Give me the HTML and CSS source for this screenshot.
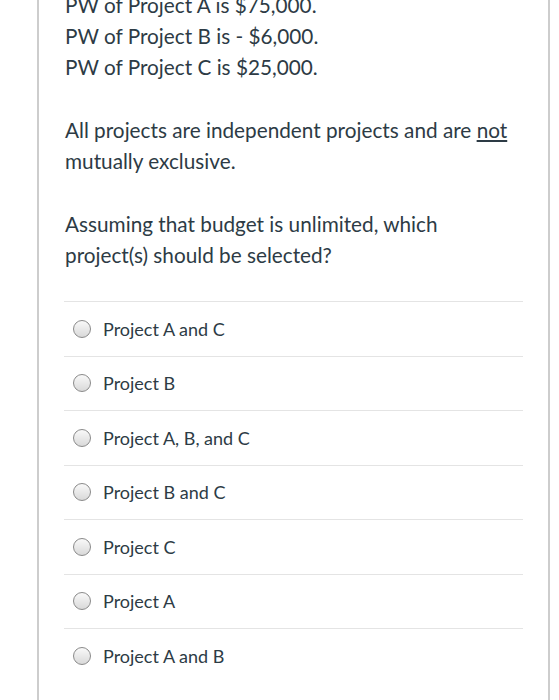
FILE: index.html
```html
<!DOCTYPE html>
<html>
<head>
<meta charset="utf-8">
<link rel="stylesheet" href="styles.css">
</head>
<body>
<div class="card">
  <div class="question">
    <p class="first">PW of Project A is $75,000.<br>PW of Project B is - $6,000.<br>PW of Project C is $25,000.</p>
    <p>All projects are independent projects and are <u>not</u> mutually exclusive.</p>
    <p>Assuming that budget is unlimited, which project(s) should be selected?</p>
  </div>
  <div class="options">
    <label class="opt"><span class="radio"></span><span class="label">Project A and C</span></label>
    <label class="opt"><span class="radio"></span><span class="label">Project B</span></label>
    <label class="opt"><span class="radio"></span><span class="label">Project A, B, and C</span></label>
    <label class="opt"><span class="radio"></span><span class="label">Project B and C</span></label>
    <label class="opt"><span class="radio"></span><span class="label">Project C</span></label>
    <label class="opt"><span class="radio"></span><span class="label">Project A</span></label>
    <label class="opt"><span class="radio"></span><span class="label">Project A and B</span></label>
  </div>
</div>
</body>
</html>
```
FILE: styles.css
```css
html, body {
  margin: 0;
  padding: 0;
  background: #fff;
  height: 100%;
  overflow: hidden;
}
body {
  font-family: Lato, "Open Sans", sans-serif;
  color: #2d3b45;
}
.card {
  margin-left: 37px;
  width: 513px;
  min-height: 760px;
  border-left: 2px solid #cdcdcd;
  border-right: 2px solid #cdcdcd;
  padding: 0 25px 0 26px;
  box-sizing: border-box;
}
.question {
  font-size: 20.75px;
  line-height: 31px;
}
.question p {
  margin: 0 0 32px 0;
}
.question p.first {
  margin-top: -10px;
}
.question p:last-child {
  margin-bottom: 30px;
}
.options {
  display: flex;
  flex-direction: column;
  margin-left: -1px;
}
.opt {
  display: flex;
  align-items: center;
  height: 54.5px;
  box-sizing: border-box;
  border-top: 1px solid #e4e4e4;
  padding-left: 9px;
  font-size: 18px;
}
.radio {
  width: 18px;
  height: 18px;
  box-sizing: border-box;
  border: 1px solid #8a8a8a;
  border-radius: 50%;
  background: linear-gradient(#f9f9f9, #d9d9d9);
  margin-right: 12px;
  flex: none;
}
.label {
  color: #2d3b45;
}
```
